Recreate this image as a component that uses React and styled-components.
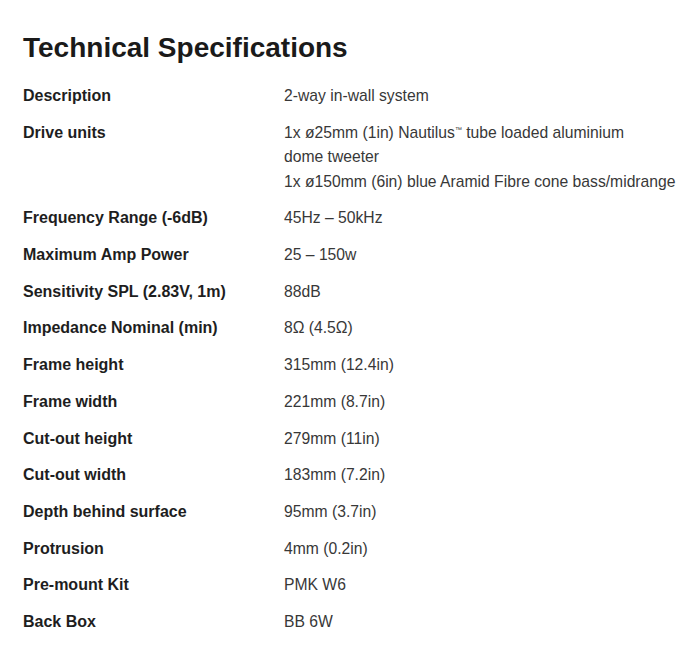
import React from "react";
import styled, { createGlobalStyle } from "styled-components";

const specs = [
  { label: "Description", value: ["2-way in-wall system"] },
  {
    label: "Drive units",
    value: [
      ["1x ø25mm (1in) Nautilus", "™", " tube loaded aluminium"],
      "dome tweeter",
      "1x ø150mm (6in) blue Aramid Fibre cone bass/midrange",
    ],
  },
  { label: "Frequency Range (-6dB)", value: ["45Hz – 50kHz"] },
  { label: "Maximum Amp Power", value: ["25 – 150w"] },
  { label: "Sensitivity SPL (2.83V, 1m)", value: ["88dB"] },
  { label: "Impedance Nominal (min)", value: ["8Ω (4.5Ω)"] },
  { label: "Frame height", value: ["315mm (12.4in)"] },
  { label: "Frame width", value: ["221mm (8.7in)"] },
  { label: "Cut-out height", value: ["279mm (11in)"] },
  { label: "Cut-out width", value: ["183mm (7.2in)"] },
  { label: "Depth behind surface", value: ["95mm (3.7in)"] },
  { label: "Protrusion", value: ["4mm (0.2in)"] },
  { label: "Pre-mount Kit", value: ["PMK W6"] },
  { label: "Back Box", value: ["BB 6W"] },
];

export default function App() {
  return (
    <>
      <GlobalStyle />
      <Wrap>
        <Title>Technical Specifications</Title>
        <Table>
          {specs.map((s) => (
            <Row key={s.label}>
              <Label>{s.label}</Label>
              <Value>
                {s.value.map((line, i) =>
                  Array.isArray(line) ? (
                    <Line key={i}>
                      {line[0]}
                      <Tm>{line[1]}</Tm>
                      {line[2]}
                    </Line>
                  ) : (
                    <Line key={i}>{line}</Line>
                  )
                )}
              </Value>
            </Row>
          ))}
        </Table>
      </Wrap>
    </>
  );
}

const GlobalStyle = createGlobalStyle`
  body {
    margin: 0;
    background: #fff;
    font-family: "Liberation Sans", Arial, sans-serif;
  }
`;

const Wrap = styled.div`
  width: 700px;
  height: 666px;
  padding: 32px 0 0 23px;
  box-sizing: border-box;
  overflow: hidden;
`;

const Title = styled.h1`
  margin: 0 0 20px;
  font-size: 28px;
  line-height: 32px;
  font-weight: 700;
  color: #1a1a1a;
`;

const Table = styled.div`
  display: flex;
  flex-direction: column;
  gap: 12.2px;
`;

const Row = styled.div`
  display: grid;
  grid-template-columns: 261px 1fr;
  line-height: 24.5px;
`;

const Label = styled.div`
  font-size: 16px;
  font-weight: 700;
  color: #1e1e1e;
`;

const Value = styled.div`
  font-size: 15.7px;
  color: #383838;
`;

const Line = styled.div``;

const Tm = styled.sup`
  font-size: 7px;
  vertical-align: 6px;
  line-height: 0;
`;
